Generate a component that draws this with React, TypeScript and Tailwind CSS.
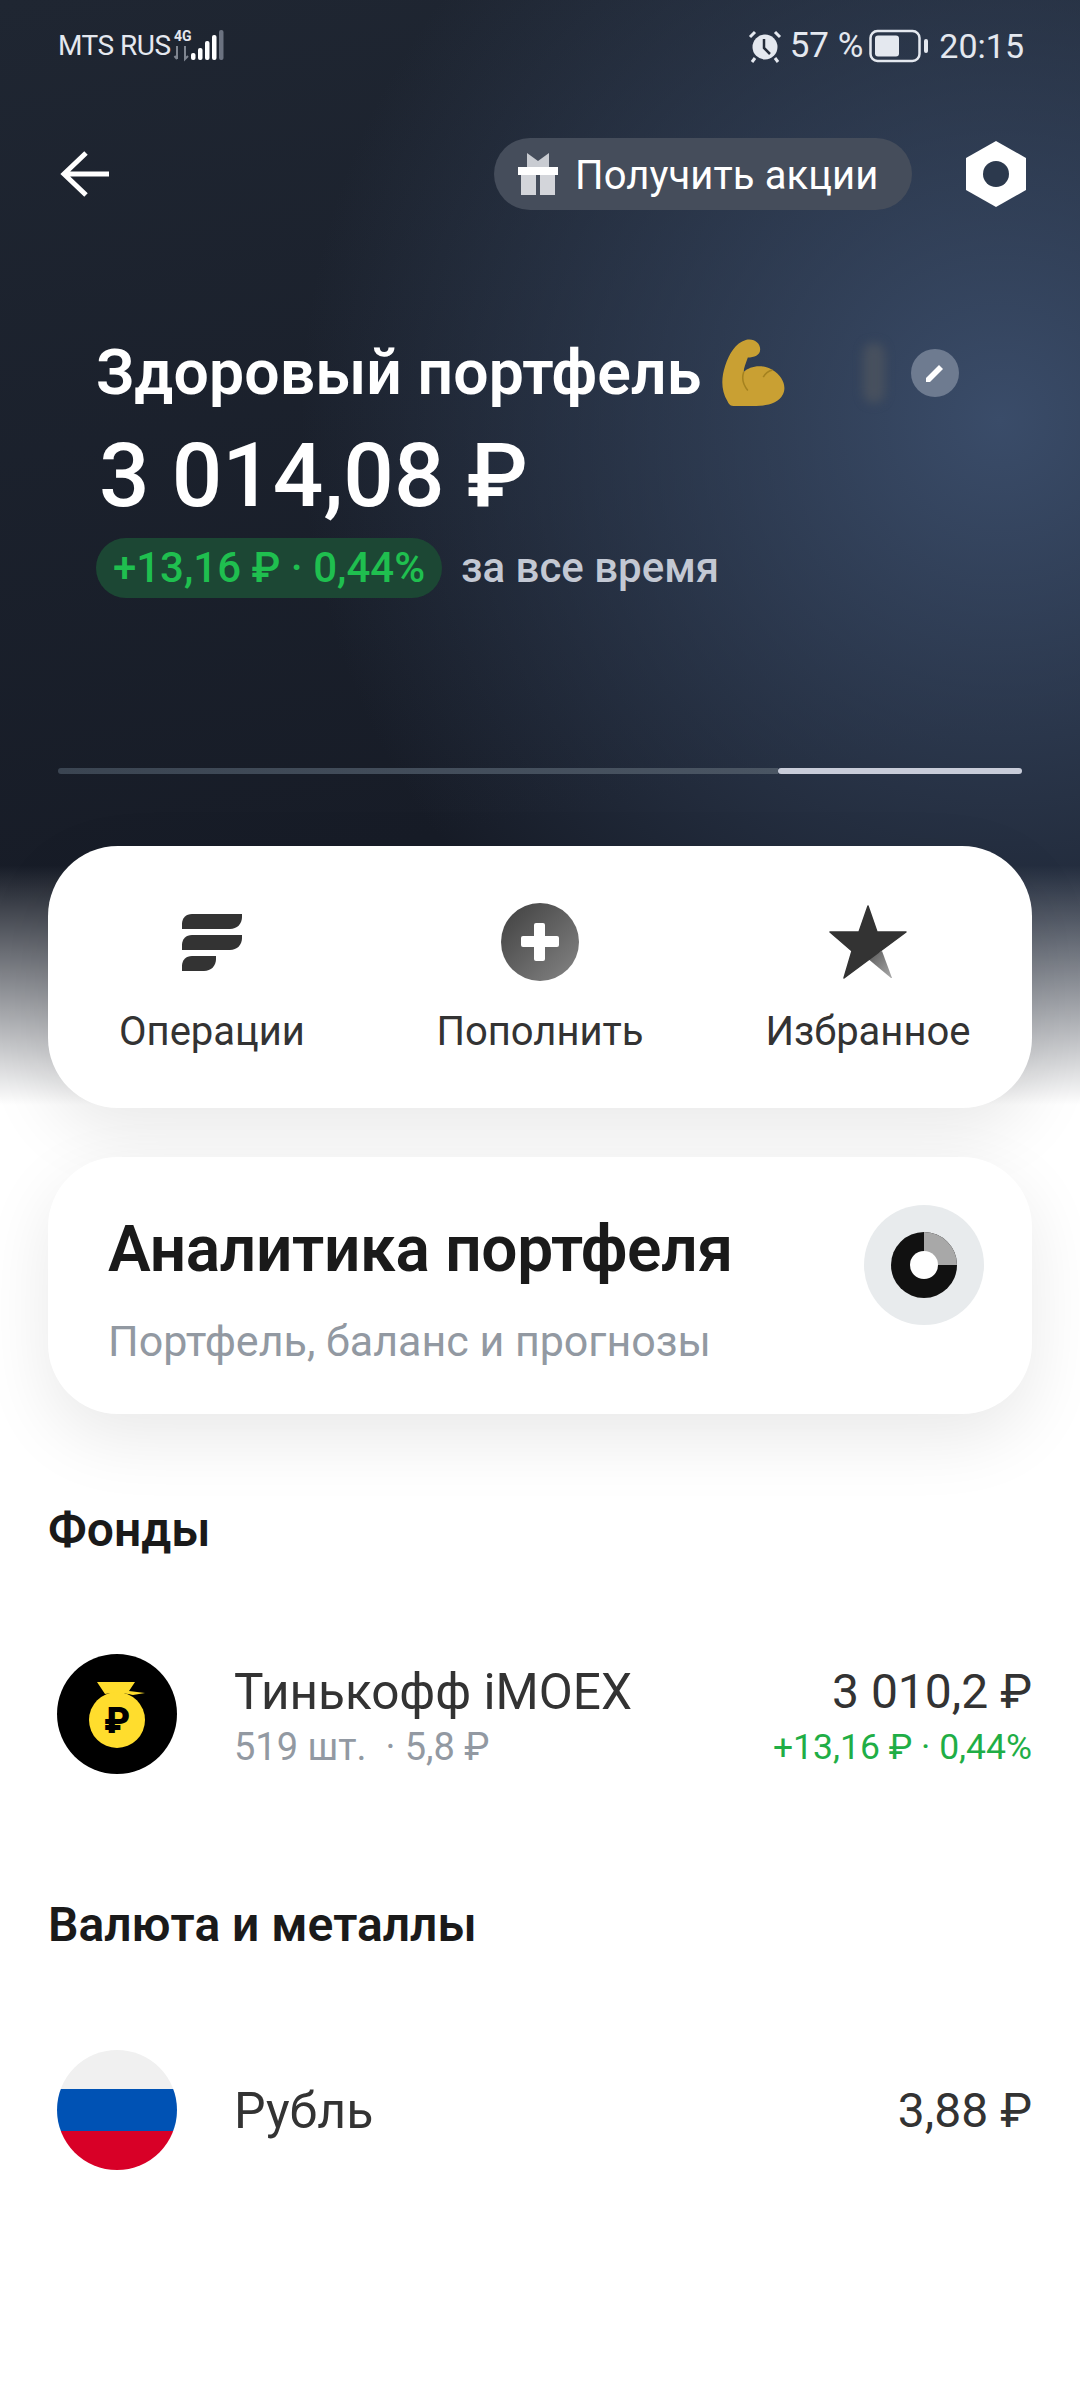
const StatusBar = () => (
  <div className="h-[92px] pl-[58px] pr-[56px] flex items-center justify-between text-[#e4e8ef]">
    <div className="flex items-center">
      <span className="text-[28px] tracking-[-0.5px]">MTS RUS</span>
      <svg width="56" height="36" viewBox="0 0 56 36" className="ml-[2px]">
        <text x="1" y="13" fontSize="14" fontWeight="700" fill="#e4e8ef">4G</text>
        <path d="M4 18v13M1.500 28l2.500 3M12 18v13l3-3" stroke="#7f8590" strokeWidth="2" fill="none" />
        <rect x="18" y="25" width="4.500" height="7" rx="2" fill="#fff" />
        <rect x="25" y="20" width="4.500" height="12" rx="2" fill="#fff" />
        <rect x="32" y="13" width="4.500" height="19" rx="2" fill="#fff" />
        <rect x="39" y="7" width="4.500" height="25" rx="2" fill="#fff" />
        <rect x="46" y="2" width="4.500" height="30" rx="2" fill="#6b7280" />
      </svg>
    </div>
    <div className="flex items-center text-[34px]">
      <svg width="34" height="34" viewBox="0 0 34 34">
        <circle cx="17" cy="18" r="12.500" fill="#e4e8ef" />
        <path d="M16 10v9l6 6" stroke="#252d3a" strokeWidth="2.500" fill="none" />
        <path d="M2 8l5-5M32 8l-5-5M7 29l-3 4M27 29l3 4" stroke="#e4e8ef" strokeWidth="3" fill="none" />
      </svg>
      <span className="ml-[8px] text-[35px]">57 %</span>
      <svg width="60" height="34" viewBox="0 0 60 34" className="ml-[6px]">
        <rect x="1.500" y="2" width="49" height="30" rx="7" fill="none" stroke="#e4e8ef" strokeWidth="2.500" />
        <rect x="6" y="6.500" width="24" height="21" rx="3" fill="#e4e8ef" />
        <rect x="55" y="10" width="4" height="14" rx="2" fill="#e4e8ef" />
      </svg>
      <span className="ml-[10px]">20:15</span>
    </div>
  </div>
);

const NavBar = () => (
  <div className="mt-[46px] h-[72px] pl-[60px] pr-[54px] flex items-center justify-between">
    <svg width="50" height="48" viewBox="0 0 50 48">
      <path d="M26 3L4 24l22 21M5 24h44" stroke="#fff" strokeWidth="5" fill="none" />
    </svg>
    <div className="flex items-center gap-[54px]">
      <div className="w-[418px] h-[72px] rounded-full bg-[#454d5b] pl-[24px] flex items-center">
        <svg width="40" height="42" viewBox="0 0 40 42">
          <path d="M9 0l11 8L31 0v14H9z" fill="#c9ccd2" />
          <rect x="0" y="14" width="40" height="8" fill="#fff" />
          <rect x="3" y="22" width="15" height="20" fill="#d3d5da" />
          <rect x="22" y="22" width="15" height="20" fill="#d3d5da" />
        </svg>
        <span className="ml-[17px] pt-[4px] text-[40px] text-white tracking-[0.1px]">Получить акции</span>
      </div>
      <svg width="60" height="66" viewBox="0 0 60 66">
        <path d="M30 0l30 17v32L30 66 0 49V17z" fill="#fff" />
        <circle cx="30" cy="33" r="13" fill="#2c394d" />
      </svg>
    </div>
  </div>
);

const Biceps = () => (
  <svg width="70" height="70" viewBox="0 0 68 66" className="ml-[18px]">
    <path
      d="M8 60C2 50 2 38 6 26 10 14 16 4 26 1c8-2 14 3 14 9 0 6-6 8-12 8-2 6-4 10-4 14 6-6 18-8 28-2 10 6 14 16 10 24-4 8-14 11-26 11H14c-4 0-5-3-6-5z"
      fill="#c9a033"
    />
    <path d="M24 32c-2 6-1 12 4 18M52 30c-4 1-7 3-9 7" stroke="#a5821f" strokeWidth="1.500" fill="none" />
  </svg>
);

const Hero = () => (
  <div className="mt-[129px]">
    <div className="pl-[96px] h-[68px] flex items-center">
      <span className="text-[62.500px] font-semibold text-white tracking-[0.1px]">Здоровый портфель</span>
      <Biceps />
      <div className="ml-[74px] w-[22px] h-[60px] rounded-full bg-[#47505e] blur-[5px]" />
      <div className="ml-[26px] w-[48px] h-[48px] rounded-full bg-[#6e7b90] flex items-center justify-center">
        <svg width="26" height="26" viewBox="0 0 26 26">
          <path d="M4 18L17 5l4 4L8 22H4z" fill="#fff" />
        </svg>
      </div>
    </div>
    <div className="mt-[24px] pl-[99px] h-[88px] flex items-center text-[89px] font-medium leading-none text-white">
      3 014,08 ₽
    </div>
    <div className="mt-[17px] pl-[96px] flex items-center">
      <div className="h-[60px] w-[346px] rounded-full bg-[#1c4734] flex items-center justify-center text-[42px] font-medium text-[#1fbf4f]">
        +13,16 ₽ · 0,44%
      </div>
      <span className="ml-[19px] text-[42px] font-medium text-[#c3c8d3]">за все время</span>
    </div>
  </div>
);

const Progress = () => (
  <div className="mt-[169px] mx-[58px] h-[6px] flex">
    <div className="w-[720px] rounded-l-full bg-gradient-to-r from-[#3b4552] to-[#4a5563]" />
    <div className="flex-1 rounded-full bg-[#c8ccd9]" />
  </div>
);

const OperationsIcon = () => (
  <svg width="60" height="57" viewBox="0 0 60 57">
    <path d="M10 0h50v3c0 7-5 12-12 12H0v-5C0 4 4 0 10 0z" fill="#333" />
    <path d="M10 21h50v3c0 7-5 12-12 12H0v-5c0-6 4-10 10-10z" fill="#333" />
    <path d="M10 42h24v3c0 7-5 12-12 12H0v-5c0-6 4-10 10-10z" fill="#333" />
  </svg>
);

const PlusIcon = () => (
  <svg width="78" height="78" viewBox="0 0 78 78">
    <defs>
      <linearGradient id="plus" x1="0" y1="0" x2="1" y2="1">
        <stop offset="0" stopColor="#3f3f3f" />
        <stop offset="1" stopColor="#858585" />
      </linearGradient>
    </defs>
    <circle cx="39" cy="39" r="39" fill="url(#plus)" />
    <rect x="20" y="33" width="38" height="11" rx="2" fill="#fff" />
    <rect x="33" y="20" width="11" height="38" rx="2" fill="#fff" />
  </svg>
);

const StarIcon = () => (
  <svg width="78" height="74" viewBox="0 0 78 74">
    <defs>
      <linearGradient id="leg" x1="0" y1="0" x2="1" y2="1">
        <stop offset="0" stopColor="#555" />
        <stop offset="1" stopColor="#aaa" />
      </linearGradient>
    </defs>
    <path d="M53 46l10 27-1 0-24-20z" fill="url(#leg)" />
    <path d="M39 1l9 26h29L15 73l8-27L1 27h29z" fill="#333" stroke="#333" strokeWidth="1.500" strokeLinejoin="round" />
  </svg>
);

const Action = ({ icon, label }: { icon: React.ReactNode; label: string }) => (
  <div className="flex flex-col items-center">
    <div className="h-[80px] flex items-center">{icon}</div>
    <span className="mt-[28px] text-[40px] leading-[44px] text-[#333]">{label}</span>
  </div>
);

const ActionsCard = () => (
  <div className="mt-[72px] mx-[48px] h-[262px] rounded-[70px] bg-white shadow-[0_24px_70px_rgba(0,0,0,0.09)] pt-[56px] grid grid-cols-3">
    <Action icon={<OperationsIcon />} label="Операции" />
    <Action icon={<PlusIcon />} label="Пополнить" />
    <Action icon={<StarIcon />} label="Избранное" />
  </div>
);

const AnalyticsCard = () => (
  <div className="mt-[49px] mx-[48px] h-[257px] rounded-[70px] bg-white shadow-[0_24px_70px_rgba(0,0,0,0.09)] pl-[60px] pr-[48px] flex justify-between">
    <div>
      <div className="mt-[58px] text-[64px] font-semibold leading-[70px] text-[#1a1a1a] tracking-[-0.3px]">Аналитика портфеля</div>
      <div className="mt-[32px] text-[43px] leading-[48px] text-[#9299a2]">Портфель, баланс и прогнозы</div>
    </div>
    <div className="mt-[48px] w-[120px] h-[120px] rounded-full bg-[#e8ebed] flex items-center justify-center">
      <svg width="66" height="66" viewBox="0 0 66 66">
        <circle cx="33" cy="33" r="33" fill="#111" />
        <path d="M33 0a33 33 0 0 1 33 33H33z" fill="#a8a8a8" />
        <circle cx="33" cy="33" r="14" fill="#fff" />
      </svg>
    </div>
  </div>
);

const SectionTitle = ({ title, className }: { title: string; className: string }) => (
  <div className={`pl-[48px] text-[48px] font-semibold leading-[54px] text-[#1a1a1a] ${className}`}>{title}</div>
);

const CoinLogo = () => (
  <svg width="120" height="120" viewBox="0 0 120 120">
    <circle cx="60" cy="60" r="60" fill="#000" />
    <path d="M40 28h38l-6 9 16 2-12 2c-4-1-8-2-16-2-4 0-8 0-12 1z" fill="#ffdd2d" />
    <circle cx="60" cy="66" r="28" fill="#ffdd2d" />
    <text x="60" y="79" textAnchor="middle" fontSize="36" fontWeight="900" fill="#000">₽</text>
  </svg>
);

const FlagLogo = () => (
  <div className="w-[120px] h-[120px] rounded-full overflow-hidden flex flex-col">
    <div className="h-[39px] bg-[#f0f0f0]" />
    <div className="h-[42px] bg-[#0052b4]" />
    <div className="h-[39px] bg-[#d80027]" />
  </div>
);

const App = () => (
  <div className="w-[1080px] min-h-[2400px] overflow-hidden font-['Roboto','Noto_Sans',sans-serif] bg-no-repeat bg-[linear-gradient(180deg,transparent_0,transparent_865px,#ffffff_1105px),radial-gradient(circle_700px_at_1000px_420px,#3a4c69_0%,transparent_100%),linear-gradient(170deg,#1f2632_0,#171c27_900px)]">
    <StatusBar />
    <NavBar />
    <Hero />
    <Progress />
    <ActionsCard />
    <AnalyticsCard />
    <SectionTitle title="Фонды" className="mt-[89px]" />
    <div className="mt-[97px] pl-[57px] pr-[48px] h-[120px] flex items-center">
      <CoinLogo />
      <div className="ml-[57px] flex-1 pt-[4px]">
        <div className="text-[49.500px] leading-[58px] text-[#333]">Тинькофф iMOEX</div>
        <div className="text-[38px] leading-[46px] text-[#9299a2] mt-[3px]">519 шт. &nbsp;·&nbsp;5,8 ₽</div>
      </div>
      <div className="text-right pt-[4px]">
        <div className="text-[48px] leading-[58px] text-[#333]">3 010,2 ₽</div>
        <div className="text-[35.500px] leading-[46px] text-[#1fae46] mt-[3px]">+13,16 ₽ · 0,44%</div>
      </div>
    </div>
    <SectionTitle title="Валюта и металлы" className="mt-[124px]" />
    <div className="mt-[98px] pl-[57px] pr-[48px] h-[120px] flex items-center">
      <FlagLogo />
      <div className="ml-[57px] flex-1 pt-[3px] text-[50px] text-[#333]">Рубль</div>
      <div className="pt-[2px] text-[48px] text-[#333]">3,88 ₽</div>
    </div>
  </div>
);

export default App;
